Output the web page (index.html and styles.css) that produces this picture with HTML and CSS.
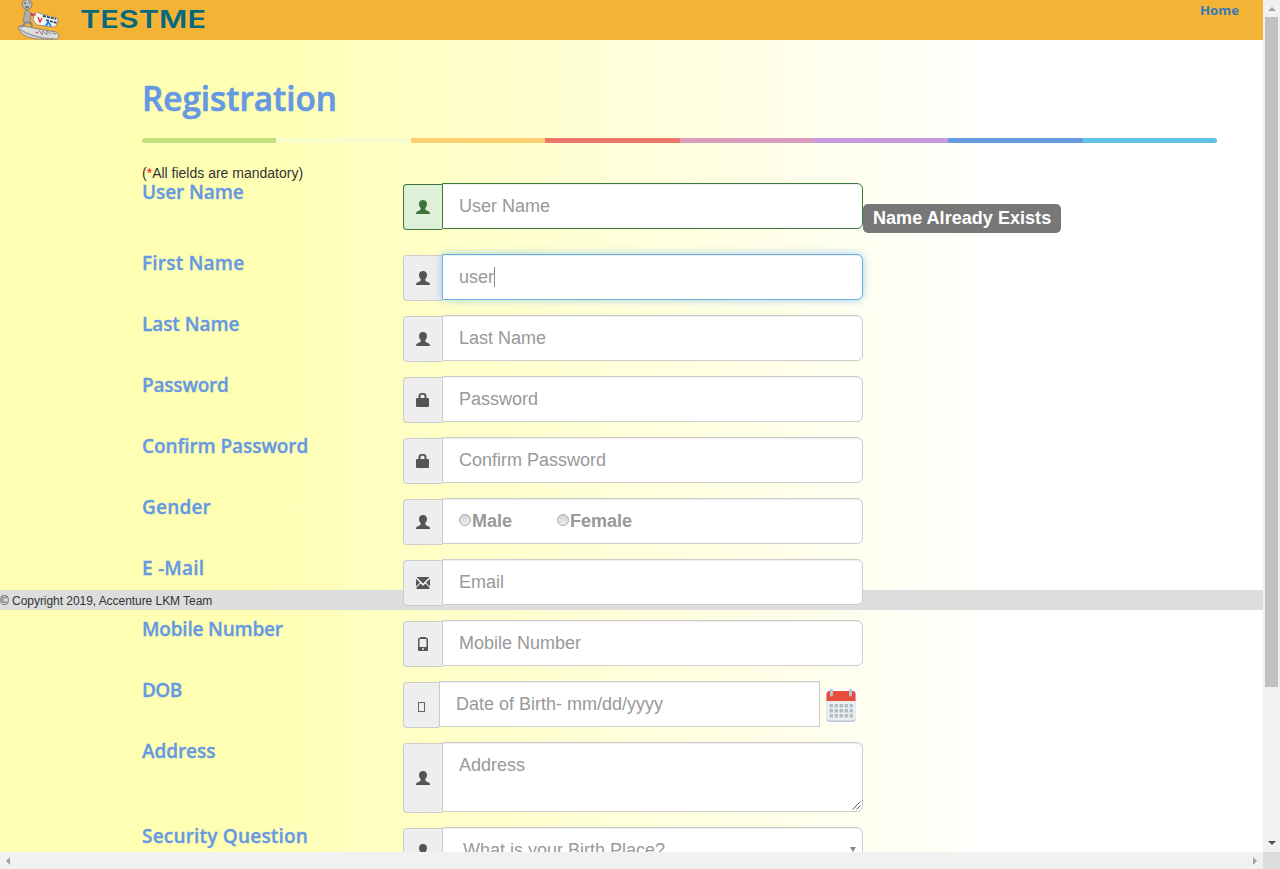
FILE: index.html
```html
<!DOCTYPE html>
<html lang="en">
<head>
<meta charset="utf-8">
<title>Registration</title>
<link rel="stylesheet" href="styles.css">
</head>
<body>
<svg width="0" height="0" class="defs">
  <symbol id="user" viewBox="0 0 14 14"><path d="M7 0C4.600 0 3 1.300 3 3.800c0 2 .7 3.500 1.700 4.400v1.300C4.500 10.400 1.600 10.900.6 12 .1 12.600 0 13.200 0 14h14c0-.8-.1-1.400-.6-2-1-1.100-3.900-1.600-4.100-2.500V8.200c1-.9 1.700-2.400 1.700-4.400C11 1.300 9.400 0 7 0z"/></symbol>
  <symbol id="lock" viewBox="0 0 14 14"><path fill-rule="evenodd" d="M2.500 5V3.200C2.500 1.200 3.800 0 5.500 0h2c1.700 0 3 1.200 3 3.200V5H12q1 0 1 1V13q0 1-1 1H1q-1 0-1-1V6q0-1 1-1zm2 0h4V3.500C8.500 2.300 8 1.800 7 1.800H6c-1 0-1.500.5-1.500 1.700z"/></symbol>
  <symbol id="mail" viewBox="0 0 14 12"><path d="M.5 0h13L7 6.500zM0 1.800 4 5.800 0 9.300zM14 1.800V9.300L10 5.800zM5 7l2 1.900L9 7l1-.1 3.500 3.600V12H.5V10.500L4 6.900z"/></symbol>
  <symbol id="phone" viewBox="0 0 10 14"><path fill-rule="evenodd" d="M2 0h6v1h1q1 0 1 1v11q0 1-1 1H1q-1 0-1-1V2q0-1 1-1h1zM1.500 2v8h7V2zM4 11.200v1.500h2v-1.500z"/></symbol>
</svg>
<div class="window">
  <div class="page">
    <header class="topbar">
      <svg class="logo" width="48" height="40" viewBox="0 0 48 40">
        <path d="M3 27q5-2 15 1l23 4q5 4 1 7H22Q5 37 3 27z" fill="#ddd" stroke="#888"/>
        <path d="M4 29q13 9 35 10" fill="none" stroke="#999" stroke-width="1.500"/>
        <path d="m19 14 3-2 4 2 16 4 1 4-3 5-18-2-4-5z" fill="#f6f6f6" stroke="#999"/>
        <path d="m28 16 13 3m-10 1 11 3" stroke="#345" stroke-width="1.800" stroke-dasharray="3 1"/>
        <path d="m23 17 2 5 2-4M21 33l2-1m-5-16 3-2" fill="none" stroke="#e22" stroke-width="1.300"/>
        <path d="m31 26 2-4 3 4" fill="none" stroke="#28d" stroke-width="2"/>
        <path d="m24 30 3 5 1-4 4 4 0-4 4 3m1-1 4 1" fill="none" stroke="#888"/>
        <path d="m11 20-2 5-4 2m6-5 5 1 1 4M13 13l6 2" fill="none" stroke="#888" stroke-width="2.200"/>
        <path d="M10 11q4-1 6 2l-1 9H8z" fill="#b0b0b0" stroke="#888"/>
        <circle cx="12" cy="4.500" r="5" fill="#bbb" stroke="#777"/>
        <path d="M9 3h2m3 0h1M10 7h4" stroke="#444"/>
        <path d="m16 14 2 1" stroke="#e22" stroke-width="2"/>
      </svg>
      <svg class="brand" width="130" height="24"><text x="-1" y="20" textLength="126" lengthAdjust="spacingAndGlyphs">TESTME</text></svg>
      <a class="home">Home</a>
    </header>
    <main class="content">
      <h1><svg width="210" height="50"><text x="0" y="36" textLength="195" lengthAdjust="spacingAndGlyphs">Registration</text></svg></h1>
      <div class="rainbow"><i></i><i></i><i></i><i></i><i></i><i></i><i></i><i></i></div>
      <div class="note">(<span>*</span>All fields are mandatory)</div>
      <form class="form">
        <div class="row first"><label>User Name</label><div class="group ok"><span class="addon"><svg width="14" height="14"><use href="#user"/></svg></span><div class="field">User Name</div><span class="badge">Name Already Exists</span></div></div>
        <div class="row"><label class="roomy">First Name</label><div class="group"><span class="addon"><svg width="14" height="14"><use href="#user"/></svg></span><div class="field focus">user<b class="caret"></b></div></div></div>
        <div class="row"><label>Last Name</label><div class="group"><span class="addon"><svg width="14" height="14"><use href="#user"/></svg></span><div class="field">Last Name</div></div></div>
        <div class="row"><label class="tight">Password</label><div class="group"><span class="addon"><svg width="14" height="14"><use href="#lock"/></svg></span><div class="field">Password</div></div></div>
        <div class="row"><label>Confirm Password</label><div class="group"><span class="addon"><svg width="14" height="14"><use href="#lock"/></svg></span><div class="field">Confirm Password</div></div></div>
        <div class="row"><label class="roomy">Gender</label><div class="group"><span class="addon"><svg width="14" height="14"><use href="#user"/></svg></span><div class="field radios"><i></i><strong>Male</strong><i></i><strong>Female</strong></div></div></div>
        <div class="row"><label class="roomy">E -Mail</label><div class="group"><span class="addon"><svg width="14" height="12"><use href="#mail"/></svg></span><div class="field">Email</div></div></div>
        <div class="row"><label class="tight">Mobile Number</label><div class="group"><span class="addon"><svg width="10" height="14"><use href="#phone"/></svg></span><div class="field">Mobile Number</div></div></div>
        <div class="row"><label class="tighter">DOB</label><div class="group dob"><span class="addon"><i class="missing"></i></span><div class="field">Date of Birth- mm/dd/yyyy</div>
          <svg class="calendar" width="33" height="36" viewBox="0 0 33 36"><path fill="#fff" d="M0 0h33v36H0z"/><rect x="1.500" y="4" width="29" height="30" rx="3" fill="#b8c5cb"/><rect x="1.500" y="4" width="29" height="28.500" rx="3" fill="#eceff1"/><path d="M1.500 13V6q0-3 3-3h23q3 0 3 3v7z" fill="#e84c3d"/><path fill="#b4bfc5" d="M4.500 16h3.500v3.500H4.500zM9.500 16H13v3.500H9.500zM14.500 16H18v3.500h-3.500zM19.500 16H23v3.500h-3.500zM24.500 16H28v3.500h-3.500zM4.500 21h3.500v3.500H4.500zM9.500 21H13v3.500H9.500zM14.500 21H18v3.500h-3.500zM19.500 21H23v3.500h-3.500zM24.500 21H28v3.500h-3.500zM4.500 26h3.500v3.500H4.500zM9.500 26H13v3.500H9.500zM14.500 26H18v3.500h-3.500zM19.500 26H23v3.500h-3.500zM24.500 26H28v3.500h-3.500z"/><path d="M6.500 2v5m19-5v5" stroke="#b8c5cb" stroke-width="3" stroke-linecap="round"/></svg></div></div>
        <div class="row tall"><label>Address</label><div class="group"><span class="addon"><svg width="14" height="14"><use href="#user"/></svg></span><div class="field area">Address<svg class="grip" width="9" height="9"><path d="m.5 8.500 8-8m-4 8 4-4" stroke="#555" fill="none"/></svg></div></div></div>
        <div class="row"><label class="roomy">Security Question</label><div class="group"><span class="addon"><svg width="14" height="14"><use href="#user"/></svg></span><div class="field select">What is your Birth Place?<svg width="6" height="5"><path d="M0 0h6L3 5z" fill="#888"/></svg></div></div></div>
      </form>
    </main>
    <footer class="copyright">© Copyright 2019, Accenture LKM Team</footer>
  </div>
  <div class="vbar"><svg width="8" height="4"><path d="M0 4h8L4 0z" fill="#a3a3a3"/></svg><div class="thumb"></div><svg width="8" height="4"><path d="M0 0h8L4 4z" fill="#505050"/></svg></div>
  <div class="hbar"><svg width="4" height="8"><path d="M4 0v8L0 4z" fill="#a3a3a3"/></svg><svg width="4" height="8"><path d="M0 0v8l4-4z" fill="#a3a3a3"/></svg></div>
  <div class="corner"></div>
</div>
</body>
</html>
```
FILE: styles.css
```css
* { box-sizing: border-box; }
body { margin: 0; overflow: hidden; font: 14px/20px "Liberation Sans", Arial, sans-serif; color: #333; }
.defs { position: absolute; }
.window { display: grid; grid-template: 852px 17px / 1263px 17px; width: 1280px; height: 869px; }
.page { position: relative; overflow: hidden; background: linear-gradient(to right, #ffffb3 240px, #fff 1000px); }
.topbar { display: flex; height: 40px; padding-left: 15px; background: #f5b335; }
.brand { margin: 8px 0 0 18px; overflow: visible; }
.brand text { font: 600 24px Inter, sans-serif; fill: #04697d; }
.home { margin: 0 24px 0 auto; font: bold 13.2px/20px "Noto Sans", sans-serif; color: #337ab7; }
.content { padding: 23px 46px 0 142px; }
h1 { margin: 0; height: 75px; padding-top: 12px; }
h1 svg { display: block; overflow: visible; }
h1 text { font: 600 34px "Open Sans", sans-serif; fill: #6699e1; stroke: #6699e1; stroke-width: .7px; }
.rainbow { display: flex; height: 5px; border-radius: 3px; overflow: hidden; }
.rainbow i { flex: 1; background: #c4e17f; }
.rainbow i:nth-child(2) { background: #f7fdca; }
.rainbow i:nth-child(3) { background: #fecf71; }
.rainbow i:nth-child(4) { background: #f0776c; }
.rainbow i:nth-child(5) { background: #db9dbe; }
.rainbow i:nth-child(6) { background: #c49cde; }
.rainbow i:nth-child(7) { background: #669ae1; }
.rainbow i:nth-child(8) { background: #62c2e4; }
.note { height: 20px; margin-top: 20px; }
.note span { color: red; }
.row { display: grid; grid-template-columns: 261px 460px; height: 61px; }
.row.first { height: 71px; }
.row.tall { height: 85px; }
label { font: 600 19px/18px "Open Sans", sans-serif; letter-spacing: -.08px; color: #6699e1; -webkit-text-stroke: .35px #6699e1; }
label.roomy { letter-spacing: .2px; }
label.tight { letter-spacing: -.2px; }
label.tighter { letter-spacing: -.6px; }
.group { position: relative; z-index: 2; display: flex; align-items: flex-start; height: 47px; }
.tall .group { height: 71px; }
.addon { display: flex; align-items: center; justify-content: center; align-self: stretch; width: 39px; margin-top: 1px; background: #eee; border: 1px solid #ccc; border-right: 0; border-radius: 4px 0 0 4px; }
.addon svg { fill: #555; }
.field { position: relative; flex: 1; height: 46px; padding: 0 16px; border: 1px solid #ccc; border-radius: 0 6px 6px 0; background: #fff; box-shadow: inset 0 1px 1px rgba(0,0,0,.075); color: #999; font-size: 18px; line-height: 44px; }
.ok .addon { background: #dff0d8; border-color: #3c763d; }
.ok .addon svg { fill: #3c763d; }
.ok .field { border-color: #3c763d; }
.focus { border-color: #66afe9; box-shadow: inset 0 1px 1px rgba(0,0,0,.075), 0 0 8px rgba(102,175,233,.6); }
.caret { display: inline-block; width: 1px; height: 20px; background: #888; vertical-align: -4px; }
.badge { position: absolute; left: 460px; top: 21px; width: 198px; height: 29px; padding-left: 10px; border-radius: 5px; background: #777; color: #fff; font: bold 18px/28px "Liberation Sans", Arial, sans-serif; letter-spacing: .04px; white-space: nowrap; }
.radios { display: flex; align-items: center; }
.radios i { width: 12px; height: 12px; margin-top: -2px; border: 1px solid #aaa; border-radius: 50%; background: linear-gradient(#d4d4d4, #eee); }
.radios strong { margin: 0 45px 0 1px; }
.radios strong, .radios i { flex: none; }
.dob .addon { width: 36px; }
.dob .field { flex: none; width: 381px; border-radius: 0; }
.missing { width: 7px; height: 10px; border: 1px solid #666; margin-top: 3px; }
.calendar { margin: 7px 0 0 5px; }
.area { height: 70px; }
.grip { position: absolute; right: 1px; bottom: 1px; }
.select { padding-left: 20px; }
.select svg { position: absolute; right: 6px; top: 19px; }
.copyright { position: absolute; z-index: 1; left: 0; right: 0; top: 590px; height: 20px; background: #ddd; font-size: 12px; line-height: 22px; letter-spacing: -.05px; }
.vbar { display: flex; flex-direction: column; align-items: center; background: #f1f1f1; padding: 7px 0; }
.thumb { width: 13px; height: 670px; margin: 6px 0 auto; background: #c1c1c1; }
.hbar { display: flex; justify-content: space-between; align-items: center; padding: 0 6px; background: #f1f1f1; }
.corner { background: #dcdcdc; }
```
